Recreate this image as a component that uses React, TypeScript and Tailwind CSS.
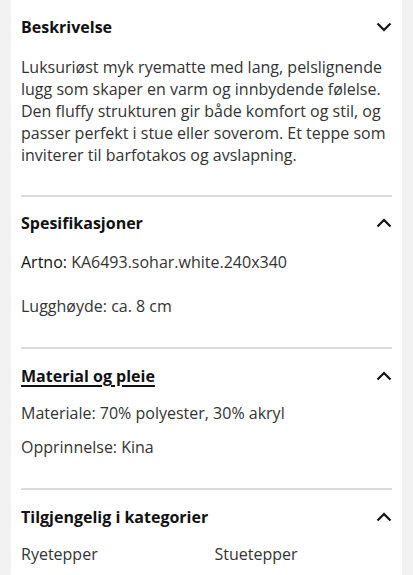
import React from 'react';

function Chevron({ up }: { up?: boolean }) {
  return (
    <svg width="16" height="10" viewBox="0 0 16 10" fill="none" className="shrink-0">
      {up ? (
        <path d="M1.5 8.5L8 2L14.5 8.5" stroke="#111" strokeWidth="2.2" />
      ) : (
        <path d="M1.5 1.5L8 8L14.5 1.5" stroke="#111" strokeWidth="2.2" />
      )}
    </svg>
  );
}

function Heading({ title, up, underline }: { title: string; up?: boolean; underline?: boolean }) {
  return (
    <div className="flex h-6 items-center justify-between">
      <h3
        className={`text-[16px] font-bold leading-6 text-[#111] ${
          underline ? 'underline decoration-2 underline-offset-[3px]' : ''
        }`}
      >
        {title}
      </h3>
      <Chevron up={up} />
    </div>
  );
}

export default function App() {
  return (
    <div
      className="min-h-screen bg-[#f2f2f2] px-[11px]"
      style={{ fontFamily: '"Open Sans", "Noto Sans", sans-serif' }}
    >
      <div className="min-h-screen bg-white px-[10px] text-[16px] leading-[22px] text-[#333]">
        {/* Beskrivelse */}
        <section className="border-b-2 border-[#dcdcdc] pb-[29px] pt-[15px]">
          <Heading title="Beskrivelse" />
          <p className="mt-[17px]">
            Luksuriøst myk ryematte med lang, pelslignende lugg som skaper en varm og innbydende følelse.
            Den fluffy strukturen gir både komfort og stil, og passer perfekt i stue eller soverom. Et
            teppe som inviterer til barfotakos og avslapning.
          </p>
        </section>

        {/* Spesifikasjoner */}
        <section className="border-b-2 border-[#dcdcdc] pb-[30px] pt-[14px]">
          <Heading title="Spesifikasjoner" up />
          <p className="mt-[16px]">
            <span className="font-medium text-[#111]">Artno:</span> KA6493.sohar.white.240x340
          </p>
          <p className="mt-[22px]">Lugghøyde: ca. 8 cm</p>
        </section>

        {/* Material og pleie */}
        <section className="border-b-2 border-[#dcdcdc] pb-[30px] pt-[15px]">
          <Heading title="Material og pleie" up underline />
          <p className="mt-[14px]">Materiale: 70% polyester, 30% akryl</p>
          <p className="mt-[12px]">Opprinnelse: Kina</p>
        </section>

        {/* Kategorier */}
        <section className="pb-6 pt-[15px]">
          <Heading title="Tilgjengelig i kategorier" up />
          <div className="mt-[14px] grid grid-cols-2 gap-x-4 gap-y-3">
            <span>Ryetepper</span>
            <span>Stuetepper</span>
          </div>
        </section>
      </div>
    </div>
  );
}
